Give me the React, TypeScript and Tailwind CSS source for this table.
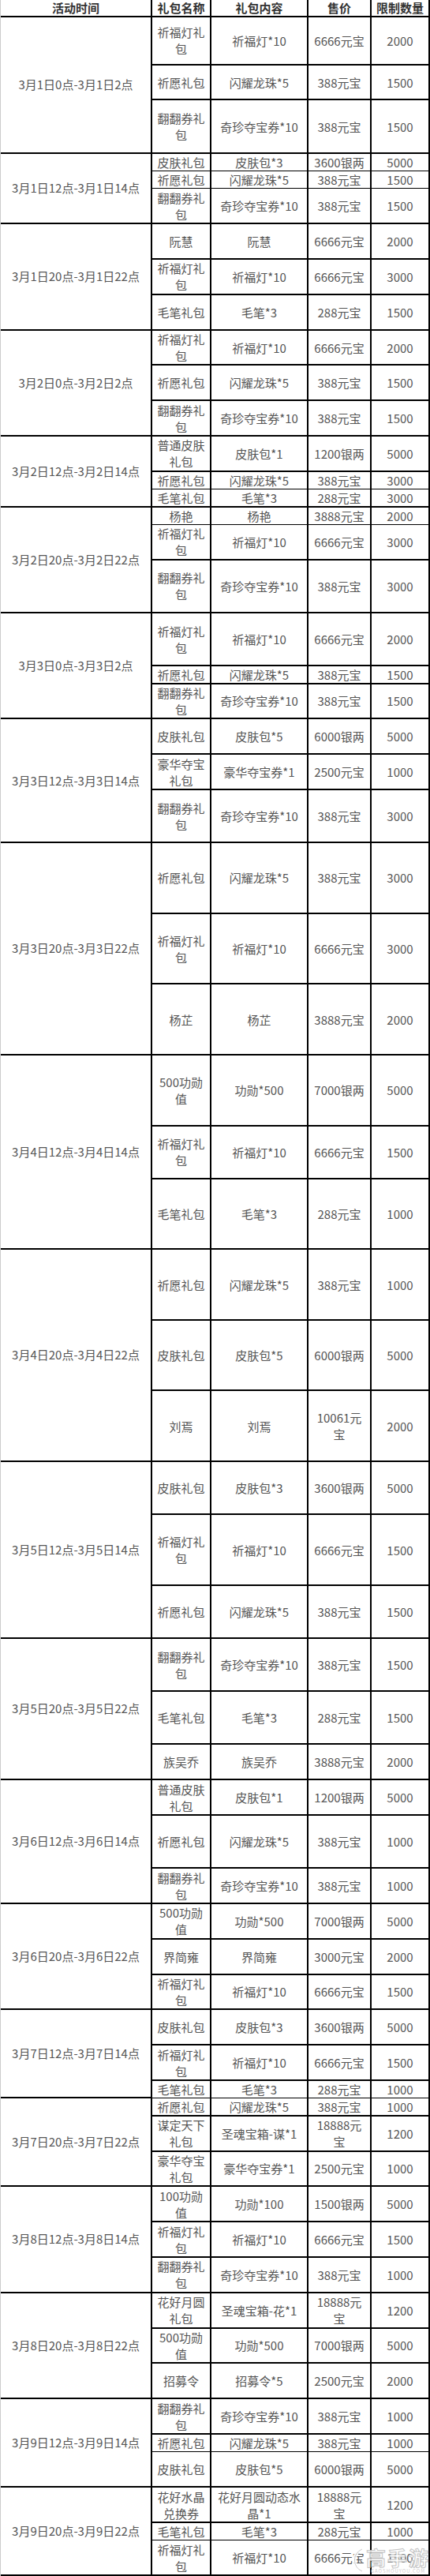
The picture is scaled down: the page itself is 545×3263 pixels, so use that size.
type Row = [string, string, string, string, number]
type Group = { time: string; rows: Row[] }

// row size: number of text lines the row is tall (0 = the odd first row)
const groups: Group[] = [
  {
    time: '3月1日0点-3月1日2点',
    rows: [
      ['祈福灯礼包', '祈福灯*10', '6666元宝', '2000', 0],
      ['祈愿礼包', '闪耀龙珠*5', '388元宝', '1500', 2],
      ['翻翻券礼包', '奇珍夺宝券*10', '388元宝', '1500', 3],
    ],
  },
  {
    time: '3月1日12点-3月1日14点',
    rows: [
      ['皮肤礼包', '皮肤包*3', '3600银两', '5000', 1],
      ['祈愿礼包', '闪耀龙珠*5', '388元宝', '1500', 1],
      ['翻翻券礼包', '奇珍夺宝券*10', '388元宝', '1500', 2],
    ],
  },
  {
    time: '3月1日20点-3月1日22点',
    rows: [
      ['阮慧', '阮慧', '6666元宝', '2000', 2],
      ['祈福灯礼包', '祈福灯*10', '6666元宝', '3000', 2],
      ['毛笔礼包', '毛笔*3', '288元宝', '1500', 2],
    ],
  },
  {
    time: '3月2日0点-3月2日2点',
    rows: [
      ['祈福灯礼包', '祈福灯*10', '6666元宝', '2000', 2],
      ['祈愿礼包', '闪耀龙珠*5', '388元宝', '1500', 2],
      ['翻翻券礼包', '奇珍夺宝券*10', '388元宝', '1500', 2],
    ],
  },
  {
    time: '3月2日12点-3月2日14点',
    rows: [
      ['普通皮肤礼包', '皮肤包*1', '1200银两', '5000', 2],
      ['祈愿礼包', '闪耀龙珠*5', '388元宝', '3000', 1],
      ['毛笔礼包', '毛笔*3', '288元宝', '3000', 1],
    ],
  },
  {
    time: '3月2日20点-3月2日22点',
    rows: [
      ['杨艳', '杨艳', '3888元宝', '2000', 1],
      ['祈福灯礼包', '祈福灯*10', '6666元宝', '3000', 2],
      ['翻翻券礼包', '奇珍夺宝券*10', '388元宝', '3000', 3],
    ],
  },
  {
    time: '3月3日0点-3月3日2点',
    rows: [
      ['祈福灯礼包', '祈福灯*10', '6666元宝', '2000', 3],
      ['祈愿礼包', '闪耀龙珠*5', '388元宝', '1500', 1],
      ['翻翻券礼包', '奇珍夺宝券*10', '388元宝', '1500', 2],
    ],
  },
  {
    time: '3月3日12点-3月3日14点',
    rows: [
      ['皮肤礼包', '皮肤包*5', '6000银两', '5000', 2],
      ['豪华夺宝礼包', '豪华夺宝券*1', '2500元宝', '1000', 2],
      ['翻翻券礼包', '奇珍夺宝券*10', '388元宝', '3000', 3],
    ],
  },
  {
    time: '3月3日20点-3月3日22点',
    rows: [
      ['祈愿礼包', '闪耀龙珠*5', '388元宝', '3000', 4],
      ['祈福灯礼包', '祈福灯*10', '6666元宝', '3000', 4],
      ['杨芷', '杨芷', '3888元宝', '2000', 4],
    ],
  },
  {
    time: '3月4日12点-3月4日14点',
    rows: [
      ['500功勋值', '功勋*500', '7000银两', '5000', 4],
      ['祈福灯礼包', '祈福灯*10', '6666元宝', '1500', 3],
      ['毛笔礼包', '毛笔*3', '288元宝', '1000', 4],
    ],
  },
  {
    time: '3月4日20点-3月4日22点',
    rows: [
      ['祈愿礼包', '闪耀龙珠*5', '388元宝', '1000', 4],
      ['皮肤礼包', '皮肤包*5', '6000银两', '5000', 4],
      ['刘焉', '刘焉', '10061元宝', '2000', 4],
    ],
  },
  {
    time: '3月5日12点-3月5日14点',
    rows: [
      ['皮肤礼包', '皮肤包*3', '3600银两', '5000', 3],
      ['祈福灯礼包', '祈福灯*10', '6666元宝', '1500', 4],
      ['祈愿礼包', '闪耀龙珠*5', '388元宝', '1500', 3],
    ],
  },
  {
    time: '3月5日20点-3月5日22点',
    rows: [
      ['翻翻券礼包', '奇珍夺宝券*10', '388元宝', '1500', 3],
      ['毛笔礼包', '毛笔*3', '288元宝', '1500', 3],
      ['族吴乔', '族吴乔', '3888元宝', '2000', 2],
    ],
  },
  {
    time: '3月6日12点-3月6日14点',
    rows: [
      ['普通皮肤礼包', '皮肤包*1', '1200银两', '5000', 2],
      ['祈愿礼包', '闪耀龙珠*5', '388元宝', '1000', 3],
      ['翻翻券礼包', '奇珍夺宝券*10', '388元宝', '1000', 2],
    ],
  },
  {
    time: '3月6日20点-3月6日22点',
    rows: [
      ['500功勋值', '功勋*500', '7000银两', '5000', 2],
      ['界简雍', '界简雍', '3000元宝', '2000', 2],
      ['祈福灯礼包', '祈福灯*10', '6666元宝', '1500', 2],
    ],
  },
  {
    time: '3月7日12点-3月7日14点',
    rows: [
      ['皮肤礼包', '皮肤包*3', '3600银两', '5000', 2],
      ['祈福灯礼包', '祈福灯*10', '6666元宝', '1500', 2],
      ['毛笔礼包', '毛笔*3', '288元宝', '1000', 1],
    ],
  },
  {
    time: '3月7日20点-3月7日22点',
    rows: [
      ['祈愿礼包', '闪耀龙珠*5', '388元宝', '1000', 1],
      ['谋定天下礼包', '圣魂宝箱-谋*1', '18888元宝', '1200', 2],
      ['豪华夺宝礼包', '豪华夺宝券*1', '2500元宝', '1000', 2],
    ],
  },
  {
    time: '3月8日12点-3月8日14点',
    rows: [
      ['100功勋值', '功勋*100', '1500银两', '5000', 2],
      ['祈福灯礼包', '祈福灯*10', '6666元宝', '1500', 2],
      ['翻翻券礼包', '奇珍夺宝券*10', '388元宝', '1000', 2],
    ],
  },
  {
    time: '3月8日20点-3月8日22点',
    rows: [
      ['花好月圆礼包', '圣魂宝箱-花*1', '18888元宝', '1200', 2],
      ['500功勋值', '功勋*500', '7000银两', '5000', 2],
      ['招募令', '招募令*5', '2500元宝', '2000', 2],
    ],
  },
  {
    time: '3月9日12点-3月9日14点',
    rows: [
      ['翻翻券礼包', '奇珍夺宝券*10', '388元宝', '1000', 2],
      ['祈愿礼包', '闪耀龙珠*5', '388元宝', '1000', 1],
      ['皮肤礼包', '皮肤包*5', '6000银两', '5000', 2],
    ],
  },
  {
    time: '3月9日20点-3月9日22点',
    rows: [
      ['花好水晶兑换券', '花好月圆动态水晶*1', '18888元宝', '1200', 2],
      ['毛笔礼包', '毛笔*3', '288元宝', '1000', 1],
      ['祈福灯礼包', '祈福灯*10', '6666元宝', '1500', 2],
    ],
  },
]

const rowHeight: Record<number, string> = {
  0: 'h-[59px]',
  1: 'h-[20.4px]',
  2: 'h-[42.8px]',
  3: 'h-[65.2px]',
  4: 'h-[87.6px]',
}

const headers = ['活动时间', '礼包名称', '礼包内容', '售价', '限制数量']

function Cell({ children }: { children: React.ReactNode }) {
  return (
    <div className="flex items-center justify-center bg-white px-[6px] text-center leading-[21px]">
      {children}
    </div>
  )
}

function Watermark() {
  return (
    <div className="pointer-events-none absolute right-0 bottom-[3px] flex items-center gap-[3px] opacity-90">
      <svg width="18" height="34" viewBox="0 0 18 34" fill="none">
        <path
          d="M16 3 A15 15 0 0 0 16 31"
          stroke="#ffffff"
          strokeWidth="5"
          strokeLinecap="round"
        />
        <path d="M16 3 A15 15 0 0 0 16 31" stroke="#c8c8c8" strokeWidth="1" />
      </svg>
      <div className="flex flex-col items-center">
        <span className="text-[25px] leading-[28px] font-bold tracking-[2px] text-white [-webkit-text-stroke:1px_#bdbdbd]">
          高手游
        </span>
        <span className="text-[6px] leading-[7px] tracking-[1px] text-[#c9c9c9]">GAOSHOUYOU.COM</span>
      </div>
    </div>
  )
}

export default function App() {
  return (
    <div className="relative w-[545px] border-l border-[#cccccc] bg-white text-[15px] text-[#555555] [font-family:'Noto_Sans_CJK_SC','Microsoft_YaHei',sans-serif]">
      <div className="flex flex-col gap-[2px] bg-black pr-[2px] pb-[2px]">
        <div className="grid h-[19.7px] grid-cols-[190px_73px_121px_78px_72px] gap-x-[2px]">
          {headers.map((h) => (
            <div
              key={h}
              className="flex items-center justify-center bg-white leading-[19px] font-bold text-[#333333]"
            >
              {h}
            </div>
          ))}
        </div>

        {groups.map((group) => (
          <div key={group.time} className="flex gap-[2px]">
            <div className="flex w-[190px] shrink-0 items-center justify-center bg-white text-center">
              {group.time}
            </div>
            <div className="flex flex-1 flex-col gap-[2px]">
              {group.rows.map((row, i) => (
                <div
                  key={i}
                  className={`grid grid-cols-[73px_121px_78px_72px] gap-x-[2px] ${rowHeight[row[4]]}`}
                >
                  <Cell>{row[0]}</Cell>
                  <Cell>{row[1]}</Cell>
                  <Cell>{row[2]}</Cell>
                  <Cell>{row[3]}</Cell>
                </div>
              ))}
            </div>
          </div>
        ))}
      </div>
      <Watermark />
    </div>
  )
}
